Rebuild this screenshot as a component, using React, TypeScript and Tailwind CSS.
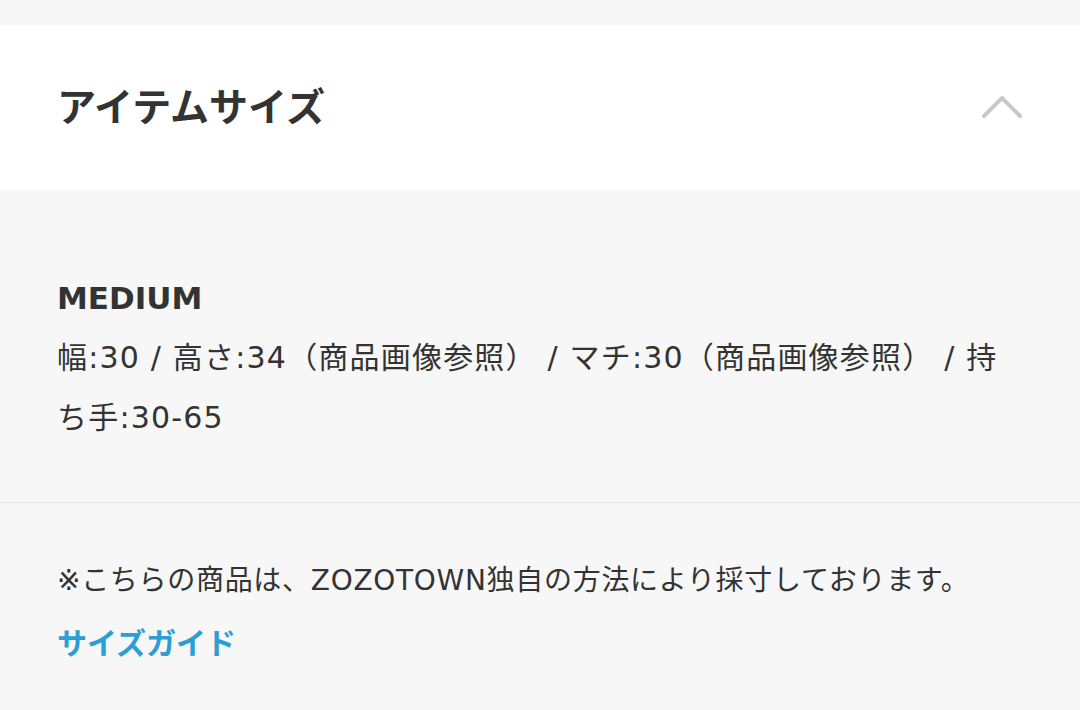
const FONT = { fontFamily: '"DejaVu Sans", "Noto Sans CJK JP", sans-serif' }

export default function App() {
  return (
    <div className="w-[1080px] h-[710px] bg-[#f7f7f7] text-[#333333] overflow-hidden" style={FONT}>
      <div className="h-[25px]" />
      <div className="bg-white h-[165px] flex items-center justify-between pl-[57px] pr-[57px]">
        <h2 className="text-[39px] font-bold leading-none">アイテムサイズ</h2>
        <svg width="42" height="24" viewBox="0 0 42 24" fill="none" className="mt-[-2px]">
          <polyline points="3,21 21,3 39,21" stroke="#c8c8c8" strokeWidth="4" strokeLinecap="round" strokeLinejoin="round" />
        </svg>
      </div>
      <div className="px-[57px] pt-[78px] pb-[54px] border-b border-[#e3e3e3]">
        <p className="text-[31px] font-bold leading-[60px]">MEDIUM</p>
        <p className="text-[30px] leading-[60px] tracking-[1.2px]">
          幅:30 / 高さ:34（商品画像参照） / マチ:30（商品画像参照） / 持<br />ち手:30-65
        </p>
      </div>
      <div className="px-[57px] pt-[58px]">
        <p className="text-[28px] leading-[40px] tracking-[0.7px]">
          ※こちらの商品は、ZOZOTOWN独自の方法により採寸しております。
        </p>
        <a className="block mt-[23px] text-[30px] font-bold leading-[40px] text-[#2b9fd4]">サイズガイド</a>
      </div>
    </div>
  )
}
